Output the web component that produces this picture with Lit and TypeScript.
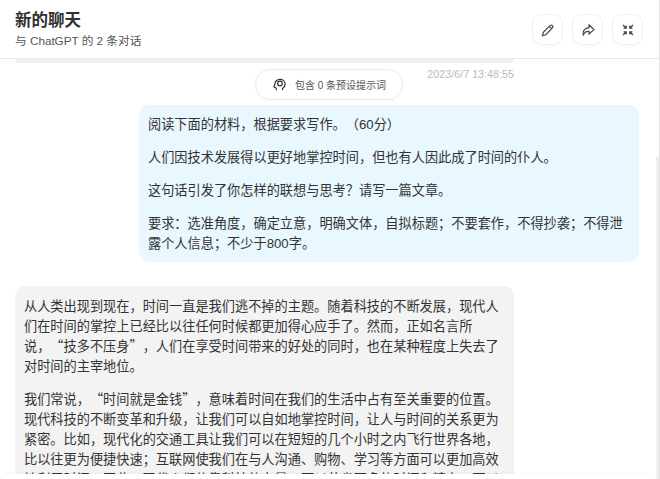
import { LitElement, html, css } from "lit";
import { customElement } from "lit/decorators.js";

@customElement("app-root")
export class AppRoot extends LitElement {
  static styles = css`
    :host { display: block; width: 660px; height: 479px; overflow: hidden; background: #fff; position: relative; font-family: "Liberation Sans", "Noto Sans CJK SC", sans-serif; color: #333; text-spacing-trim: space-all; }
    .header { height: 59px; box-sizing: border-box; border-bottom: 1px solid #e8e8e8; display: flex; justify-content: space-between; align-items: center; padding: 0 17px 0 15px; background: #fff; }
    .title { font-size: 16.5px; font-weight: 700; line-height: 24px; color: #303030; }
    .sub { font-size: 11.7px; line-height: 18px; color: #555; }
    .actions { display: flex; gap: 9px; margin-top: 1px; }
    .btn { width: 31px; height: 31px; box-sizing: border-box; border: 1px solid #f0f0f0; border-radius: 10px; display: flex; align-items: center; justify-content: center; box-shadow: 0 1px 3px rgba(0,0,0,.02); }
    .btn svg { width: 16px; height: 16px; fill: none; stroke: #444; stroke-width: 1.2; }
    .body { padding: 0 21px 0 15px; }
    .prev { height: 4px; width: 499px; background: #f0f0f0; border-radius: 0 0 10px 10px; }
    .stamp { display: flex; justify-content: center; position: relative; height: 36px; margin-top: 6px; }
    .time { position: absolute; right: 125px; top: -2px; font-size: 10.75px; line-height: 14px; color: #bbb; }
    .pill { display: flex; align-items: center; gap: 8px; height: 31px; box-sizing: border-box; padding: 0 16px; border: 1px solid #ececec; border-radius: 16px; font-size: 10px; color: #555; box-shadow: 0 1px 4px rgba(0,0,0,.03); background: #fff; margin-left: 4px; }
    .pill svg { width: 15px; height: 15px; fill: none; stroke: #333; stroke-width: 1.3; }
    .row { display: flex; justify-content: flex-end; }
    .bubble { box-sizing: border-box; font-size: 13.2px; line-height: 20px; color: #333; border-radius: 10px; padding: 9px; width: 500px; }
    .bubble p { margin: 0 0 13px; }
    .bubble p:last-child { margin-bottom: 0; }
    .user { background: #e9f7ff; padding-top: 10px; padding-bottom: 8px; }
    .bot { background: #f3f3f3; margin-top: 24px; padding-top: 10px; width: 499px; padding-right: 14px; font-family: "Noto Sans CJK SC", sans-serif; }
    .panel { position: absolute; left: 0; right: 5px; bottom: -20px; height: 25px; background: #fff; border-radius: 10px 10px 0 0; box-shadow: 0 -1px 3px rgba(0,0,0,.04); }
    .track { position: absolute; right: 0; top: 0; bottom: 0; width: 1px; background: #e2e2e2; }
    .thumb { position: absolute; right: 1px; top: 157px; bottom: 0; width: 3px; background: #efefef; }
  `;

  render() {
    return html`
      <div class="header">
        <div>
          <div class="title">新的聊天</div>
          <div class="sub">与 ChatGPT 的 2 条对话</div>
        </div>
        <div class="actions">
          <div class="btn"><svg viewBox="0 0 16 16"><path d="M2.500 13.700l.8-3.400 6.900-6.900a1.300 1.300 0 0 1 1.900 0l.4.4a1.300 1.300 0 0 1 0 1.900L5.800 12.700z M9.200 4.400l2.500 2.500"/></svg></div>
          <div class="btn"><svg viewBox="0 0 16 16"><path d="M9 2.800L14 7.600 9 12V9.400C6.400 9.200 4.200 10.400 3.300 13.200 2 9.500 4.800 6 9 5.600z" stroke-linejoin="round"/></svg></div>
          <div class="btn"><svg viewBox="0 0 16 16"><path d="M3 3l3 3M6.200 3.600V6.200H3.600M13 3L10 6M9.800 3.600V6.200h2.600M3 13l3-3M6.200 12.400V9.800H3.600M13 13l-3-3M9.800 12.400V9.800h2.600"/></svg></div>
        </div>
      </div>
      <div class="body">
        <div class="prev"></div>
        <div class="stamp">
          <div class="pill">
            <svg viewBox="0 0 16 16"><path d="M5 14l-1-2.500-2-1 1-2.500c0-3.500 2.500-5.500 5.500-5.500S14 4.500 14 7.500c0 2-1 3.500-2.500 4.500l-.5 2"/><circle cx="8.500" cy="7" r="2.500"/></svg>
            <span>包含 0 条预设提示词</span>
          </div>
          <div class="time">2023/6/7 13:48:55</div>
        </div>
        <div class="row">
          <div class="bubble user">
            <p>阅读下面的材料，根据要求写作。（60分）</p>
            <p>人们因技术发展得以更好地掌控时间，但也有人因此成了时间的仆人。</p>
            <p>这句话引发了你怎样的联想与思考？请写一篇文章。</p>
            <p>要求：选准角度，确定立意，明确文体，自拟标题；不要套作，不得抄袭；不得泄露个人信息；不少于800字。</p>
          </div>
        </div>
        <div class="bubble bot">
          <p>从人类出现到现在，时间一直是我们逃不掉的主题。随着科技的不断发展，现代人们在时间的掌控上已经比以往任何时候都更加得心应手了。然而，正如名言所说，“技多不压身”，人们在享受时间带来的好处的同时，也在某种程度上失去了对时间的主宰地位。</p>
          <p>我们常说，“时间就是金钱”，意味着时间在我们的生活中占有至关重要的位置。现代科技的不断变革和升级，让我们可以自如地掌控时间，让人与时间的关系更为紧密。比如，现代化的交通工具让我们可以在短短的几个小时之内飞行世界各地，比以往更为便捷快速；互联网使我们在与人沟通、购物、学习等方面可以更加高效地利用时间。因此，现代人们依靠科技的力量，可以节省更多的时间和精力，可以</p>
        </div>
      </div>
      <div class="track"></div>
      <div class="thumb"></div>
      <div class="panel"></div>
    `;
  }
}
